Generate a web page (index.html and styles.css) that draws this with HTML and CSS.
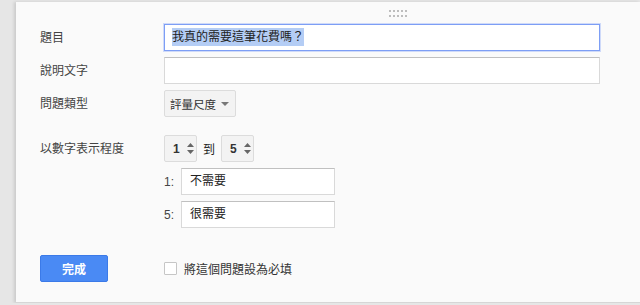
FILE: index.html
```html
<!DOCTYPE html>
<html lang="zh-Hant">
<head>
    <meta charset="UTF-8">
    <title>編輯問題</title>
    <link rel="stylesheet" href="styles.css">
</head>
<body>
    <div class="panel">
        <div class="drag-handle">
            <span></span><span></span><span></span><span></span><span></span>
            <span></span><span></span><span></span><span></span><span></span>
        </div>

        <div class="row">
            <div class="label">題目</div>
            <div class="field field-focus"><span class="selected">我真的需要這筆花費嗎？</span></div>
        </div>
        <div class="row">
            <div class="label">說明文字</div>
            <div class="field"></div>
        </div>
        <div class="row">
            <div class="label">問題類型</div>
            <div class="select">評量尺度 <span class="caret"></span></div>
        </div>

        <div class="row row-scale">
            <div class="label">以數字表示程度</div>
            <div class="scale">
                <div class="select select-num"><span>1</span>
                    <svg class="updown" width="7" height="11" viewBox="0 0 7 11"><path d="M3.5 0 L7 4 L0 4 Z M0 7 L7 7 L3.5 11 Z" fill="#666"/></svg>
                </div>
                <span class="to">到</span>
                <div class="select select-num"><span>5</span>
                    <svg class="updown" width="7" height="11" viewBox="0 0 7 11"><path d="M3.5 0 L7 4 L0 4 Z M0 7 L7 7 L3.5 11 Z" fill="#666"/></svg>
                </div>
            </div>
        </div>
        <div class="row row-end">
            <div class="label"></div>
            <span class="end-num">1:</span>
            <div class="field field-short">不需要</div>
        </div>
        <div class="row row-end">
            <div class="label"></div>
            <span class="end-num">5:</span>
            <div class="field field-short">很需要</div>
        </div>

        <div class="row row-footer">
            <div class="label"><button class="done-button">完成</button></div>
            <label class="required">
                <span class="checkbox"></span>
                將這個問題設為必填
            </label>
        </div>
    </div>
</body>
</html>
```

FILE: styles.css
```css
body, html {
    margin: 0;
    padding: 0;
    background-color: #e6e6e6;
    font-family: "Liberation Sans", "Noto Sans CJK TC", sans-serif;
    font-size: 12px;
    color: #222;
}

.panel {
    margin: 2px 0 0 16px;
    height: 301px;
    box-sizing: border-box;
    background-color: #fafafa;
    border-bottom: 1px solid #d6d6d6;
    box-shadow: -2px 0 3px rgba(0, 0, 0, 0.12);
    padding-left: 24px;
}

/* drag dots at the top */
.drag-handle {
    display: grid;
    grid-template-columns: repeat(5, 2px);
    gap: 2px 2px;
    width: 18px;
    margin-left: 349px;
    padding: 8px 0 6px;
    height: 8px;
}

.drag-handle span {
    width: 2px;
    height: 2px;
    background-color: #bdbdbd;
}

.row {
    display: flex;
    align-items: center;
    margin-bottom: 6px;
}

.label {
    width: 124px;
    flex-shrink: 0;
    color: #444;
    font-size: 12px;
    line-height: 16px;
}

.field {
    box-sizing: border-box;
    width: 436px;
    height: 27px;
    border: 1px solid #d9d9d9;
    border-top-color: #c0c0c0;
    background-color: #fff;
    padding: 0 7px;
    line-height: 25px;
    font-size: 12px;
}

.field-focus {
    border: 1px solid #7d9ef5;
    box-shadow: 0 0 0 1px rgba(125, 158, 245, 0.35);
}

.selected {
    background-color: #b4cdf5;
    padding: 2px 0;
}

.select {
    box-sizing: border-box;
    height: 27px;
    display: inline-flex;
    align-items: center;
    padding: 0 6px 0 5px;
    border: 1px solid #dcdcdc;
    border-radius: 2px;
    background-color: #f3f3f3;
    font-size: 11.5px;
    color: #333;
}

.caret {
    display: inline-block;
    margin-left: 5px;
    width: 0;
    height: 0;
    border-left: 4px solid transparent;
    border-right: 4px solid transparent;
    border-top: 4px solid #777;
}

.row-scale {
    margin-top: 18px;
}

.scale {
    display: flex;
    align-items: center;
}

.select-num {
    width: 33px;
    padding: 0 0 0 8px;
    font-weight: bold;
    font-size: 12px;
}

.updown {
    margin-left: 7px;
}

.to {
    margin: 0 6px;
    font-size: 12px;
}

.end-num {
    width: 17px;
    font-size: 12px;
    color: #444;
}

.field-short {
    width: 154px;
    padding-left: 8px;
}

.row-footer {
    margin-top: 27px;
}

.done-button {
    width: 68px;
    height: 27px;
    border: 1px solid #3b7ae8;
    border-radius: 2px;
    background-color: #4a8af4;
    color: #fff;
    font-family: inherit;
    font-size: 12px;
    font-weight: bold;
    padding: 0;
}

.required {
    display: flex;
    align-items: center;
    font-size: 12px;
    color: #333;
}

.checkbox {
    width: 11px;
    height: 11px;
    border: 1px solid #c6c6c6;
    background-color: #fff;
    border-radius: 1px;
    margin-right: 7px;
}
```
